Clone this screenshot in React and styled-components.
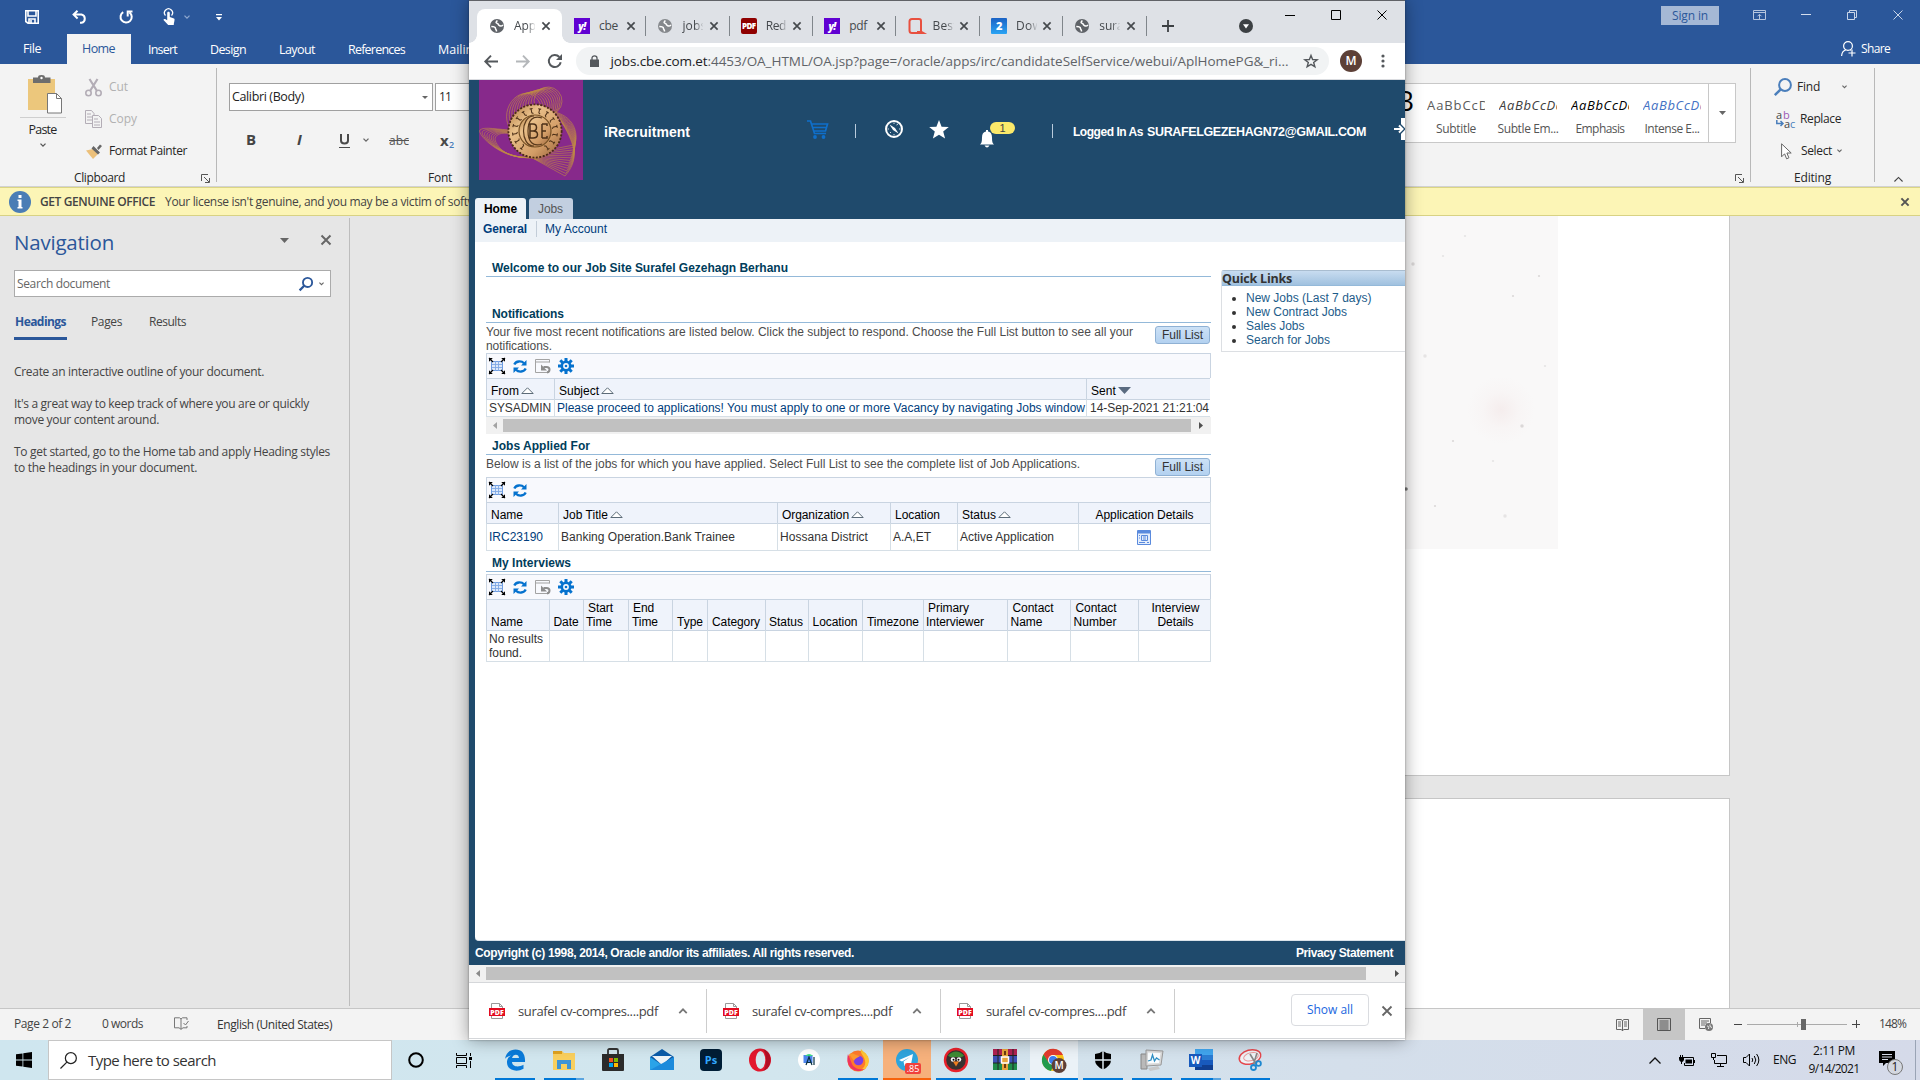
import React, { useLayoutEffect, useRef } from 'react';
import styled, { createGlobalStyle, css } from 'styled-components';

const UI = '"Open Sans", "Noto Sans", sans-serif';
const ARIAL = '"Liberation Sans", Arial, sans-serif';

const Global = createGlobalStyle`
  * { box-sizing: border-box; }
  body { margin: 0; overflow: hidden; font-family: ${UI}; font-size: 12px; }
  svg { display: block; flex: none; overflow: visible; }
`;

/* ---------- text that tracks itself to a given width ---------- */
const TextBox = styled.span`
  display: block;
  flex: none;
  width: ${p => p.$w}px;
  margin-left: ${p => p.$ml || 0}px;
  white-space: pre;
  font-family: ${p => (p.$arial ? ARIAL : UI)};
  font-size: ${p => p.$s || 12}px;
  font-weight: ${p => p.$b || 400};
  font-style: ${p => (p.$i ? 'italic' : 'normal')};
  color: ${p => p.$c || 'inherit'};
  line-height: ${p => p.$lh || 16}px;
  position: relative;
  top: ${p => p.$dy || 0}px;
`;
function Fit({ w, ml, s, b, i, c, lh, dy, arial, children }) {
  const ref = useRef(null);
  useLayoutEffect(() => {
    const el = ref.current;
    el.style.letterSpacing = '0px';
    const n = el.textContent.length;
    el.style.letterSpacing = `${(w - el.getBoundingClientRect().width) / n}px`;
  });
  return (
    <TextBox $w={w} $ml={ml} $s={s} $b={b} $i={i} $c={c} $lh={lh} $dy={dy} $arial={arial}>
      <span ref={ref}>{children}</span>
    </TextBox>
  );
}
const A = p => <Fit arial {...p} />;

const Slot = styled.span`
  display: flex; flex: none; align-items: center; justify-content: center;
  width: ${p => p.$w}px;
  height: ${p => (p.$h ? p.$h + 'px' : 'auto')};
  margin-left: ${p => p.$ml || 0}px;
  margin-top: ${p => p.$mt || 0}px;
`;
const Row = styled.div`
  display: flex; flex: none; align-items: ${p => p.$align || 'center'};
  height: ${p => p.$h}px;
  padding-left: ${p => p.$pl || 0}px;
  margin-top: ${p => p.$mt || 0}px;
`;
const Chev = ({ c = '#666', w = 6, up, sw = 1.3 }) => (
  <svg width={w} height={w / 2 + 1} viewBox="0 0 6 4" fill="none" stroke={c} strokeWidth={sw}>
    <path d={up ? 'M.5 3.4 3 .9l2.5 2.5' : 'M.5.6 3 3.1 5.5.6'} />
  </svg>
);
const Cross = ({ s = 10, c = '#333', w = 1 }) => (
  <svg width={s} height={s} viewBox="0 0 10 10" stroke={c} strokeWidth={w}><path d="M.5.5l9 9M9.5.5l-9 9" /></svg>
);

const Desktop = styled.div`
  position: relative; width: 1920px; height: 1080px; overflow: hidden;
  display: flex; flex-direction: column; background: #e6e6e6;
`;

/* ================= Word ================= */
const WordTitle = styled.div`
  display: flex; align-items: center; height: 34px; flex: none; background: #2b579a; color: #fff;
`;
const WordTabs = styled.div`
  display: flex; align-items: center; height: 30px; flex: none; background: #2b579a; color: #fff;
`;
const ActiveTab = styled.div`
  display: flex; align-items: center; height: 30px; width: 64px; margin-left: 26px; padding-left: 15px;
  background: #f3f3f3; color: #2b579a;
`;
const SignIn = styled.div`
  display: flex; align-items: center; width: 58px; height: 19px; margin: -3px 0 0 1439px; padding-left: 11px;
  background: #a5b8d5; color: #2b579a; flex: none;
`;
const Ribbon = styled.div`
  display: flex; height: 123px; flex: none; background: #f3f3f3; border-bottom: 1px solid #d2d2d2; color: #262626;
`;
const Group = styled.div`
  display: flex; flex-direction: column; width: ${p => p.$w}px; flex: none;
`;
const GroupLine = styled.div`
  width: 1px; height: 114px; margin-top: 4px; flex: none; background: #b8b8b8;
`;
const PasteCol = styled.div`
  display: flex; flex-direction: column; align-items: center; width: 85px; padding-top: 11px;
`;
const PasteArt = styled.div`padding-left: 5px;`;
const PasteRule = styled.div`width: 46px; height: 1px; background: #cfcfcf; margin: 3px 0 3px;`;
const Combo = styled.div`
  display: flex; align-items: center; width: ${p => p.$w}px; height: 28px; margin-left: ${p => p.$ml}px;
  border: 1px solid #a0a0a0; background: #fff; padding-left: 2px; flex: none;
`;
const Gallery = styled.div`
  display: flex; height: 60px; width: 453px; margin: 19px 0 0 0; border: 1px solid #c8c8c8; background: #fff;
  justify-content: flex-end; flex: none;
`;
const StyleCell = styled.div`
  width: 72px; height: 58px; padding: 13px 6px 0 7px; flex: none; color: #555;
`;
const Sample = styled.div`
  width: 58px; height: 22px; overflow: hidden; color: ${p => p.$c};
`;
const StyleName = styled.div`display: flex; justify-content: center; width: 58px; padding-top: 2px;`;
const TitleSample = styled.div`
  font: 400 27px/30px ${UI}; color: #000; padding: 2px 7px 0 0; letter-spacing: -1px;
`;
const GalleryMore = styled.div`
  width: 27px; border-left: 1px solid #c8c8c8; display: flex; align-items: center; justify-content: center; flex: none;
`;
const Notice = styled.div`
  display: flex; align-items: center; height: 29px; flex: none; background: #fcf5b6;
  border-top: 1px solid #dbd584; border-bottom: 1px solid #d8d284; color: #444;
`;
const WordBody = styled.div`display: flex; height: 792px; flex: none; background: #e6e6e6;`;
const NavPane = styled.div`
  width: 350px; border-right: 1px solid #bdbdbd; margin: 2px 0; color: #444; display: flex; flex-direction: column; flex: none;
`;
const NavSearch = styled.div`
  display: flex; align-items: center; width: 317px; height: 27px; margin: 10px 0 0 14px; border: 1px solid #ababab; background: #fff; flex: none;
`;
const NavTabs = styled.div`display: flex; height: 43px; margin-left: 14px; padding-top: 17px; flex: none;`;
const NavTab = styled.div`
  width: ${p => p.$w}px; height: 26px; margin-left: ${p => p.$ml || 0}px;
  ${p => p.$on && css`border-bottom: 3px solid #2b579a;`}
`;
const NavText = styled.div`padding: ${p => p.$pt}px 0 0 14px;`;
const Canvas = styled.div`display: flex; flex-direction: column; width: 1380px; padding-left: 140px; flex: none;`;
const Sheet = styled.div`
  height: ${p => p.$h}px; flex: none; background: #fff; border-right: 1px solid #c6c6c6;
  border-bottom: 1px solid #c6c6c6; margin-bottom: 22px;
  ${p => p.$top && css`border-top: 1px solid #c6c6c6; border-bottom: 0; margin-bottom: 0;`}
`;
const Photo = styled.div`
  width: 1068px; height: 333px; padding-left: 915px;
  background: radial-gradient(circle at 1011px 194px, #f5eded 0, #f8f5f5 18px, transparent 34px), #f9f8f8;
`;
const Status = styled.div`
  display: flex; align-items: center; height: 32px; flex: none; background: #f3f3f3; border-top: 1px solid #c6c6c6; color: #444;
`;
const ViewOn = styled.div`
  width: 42px; height: 31px; background: #c6c6c6; display: flex; align-items: center; justify-content: center; margin-left: 14px; flex: none;
`;
const Launcher = () => (
  <svg width="9" height="9" viewBox="0 0 9 9" fill="none" stroke="#555"><path d="M.5 7V.5H7M3 3l5 5M8.5 4v4.500H4" /></svg>
);
const Glass = ({ s = 18, c = '#4a7ebb', w = 2 }) => (
  <svg width={s} height={s} viewBox="0 0 18 18" fill="none" stroke={c} strokeWidth={w}><circle cx="11" cy="7" r="5.9" /><path d="M6.7 11.300.8 17.200" strokeWidth={w + .5} /></svg>
);

function WordTop() {
  return (
    <>
      <WordTitle>
        <Slot $w={14} $ml={25}><svg width="14" height="14" viewBox="0 0 14 14" fill="none" stroke="#fff" strokeWidth="1.6"><path d="M.8.8h12.400v12.400H3L.8 11.500zM3 1v5h8V1M4 13V9h6v4M6 10v3" /></svg></Slot>
        <Slot $w={15} $ml={33}><svg width="15" height="14" viewBox="0 0 15 14" fill="none" stroke="#fff" strokeWidth="2"><path d="M5.500.8 1.600 4.600l4 3.800M2 4.600h7.500a4.200 4.200 0 0 1 0 8.200H8" /></svg></Slot>
        <Slot $w={14} $ml={32}><svg width="14" height="14" viewBox="0 0 14 14" fill="none" stroke="#fff" strokeWidth="2"><path d="M4.200 2.200A5.600 5.600 0 1 0 10.500 2.500M13.500 1.500H8.700v5" /></svg></Slot>
        <Slot $w={12} $ml={30}><svg width="12" height="16" viewBox="0 0 12 16"><path d="M2.500 6.500a4 4 0 1 1 6 0" fill="none" stroke="#fff" strokeWidth="1.300" /><path d="M4.200 4c0-1.700 2.600-1.700 2.600 0v4l4.200 1.500c1 .4.500 2-.2 5.500V16H5.200L.5 11c0-1 1.200-1.500 3.700.3z" fill="#fff" /></svg></Slot>
        <Slot $w={6} $ml={9}><Chev c="#8fa8cf" /></Slot>
        <Slot $w={6} $ml={26}><svg width="6" height="7" viewBox="0 0 6 7" fill="#fff"><path d="M0 0h6v1.200H0zM0 3h6L3 6.500z" /></svg></Slot>
        <SignIn><Fit w={36}>Sign in</Fit></SignIn>
        <Slot $w={13} $ml={34} $mt={-4}><svg width="13" height="10" viewBox="0 0 13 10" fill="none" stroke="#b6c6df"><path d="M.5.5h12v9H.5zM.5 2.500h12M6.500 9V4.500M4.500 6.300l2-2 2 2" /></svg></Slot>
        <Slot $w={10} $ml={35} $mt={-5}><svg width="10" height="1"><path d="M0 .5h10" stroke="#d3dded" /></svg></Slot>
        <Slot $w={10} $ml={36} $mt={-4}><svg width="10" height="10" viewBox="0 0 10 10" fill="none" stroke="#c9d5e8"><path d="M.5 2.500h7v7h-7zM2.500 2.500v-2h7v7h-2" /></svg></Slot>
        <Slot $w={10} $ml={36} $mt={-4}><Cross c="#c9d5e8" /></Slot>
      </WordTitle>
      <WordTabs>
        <Fit w={18} ml={23} s={12.500} dy={0}>File</Fit>
        <ActiveTab><Fit w={33} s={12.500}>Home</Fit></ActiveTab>
        <Fit w={29} ml={17} s={12.500} dy={1}>Insert</Fit>
        <Fit w={36} ml={33} s={12.500} dy={1}>Design</Fit>
        <Fit w={36} ml={33} s={12.500} dy={1}>Layout</Fit>
        <Fit w={57} ml={33} s={12.500} dy={1}>References</Fit>
        <Fit w={48} ml={33} s={12.500} dy={1}>Mailings</Fit>
        <Slot $w={15} $ml={1355}><svg width="15" height="16" viewBox="0 0 15 16" fill="none" stroke="#fff" strokeWidth="1.200"><circle cx="7" cy="5" r="4.400" /><path d="M.6 15c.3-4 2-5.500 4.200-6M9 9.400l.6.200M11 8.500v7M7.500 12h7" /></svg></Slot>
        <Fit w={29} ml={5}>Share</Fit>
      </WordTabs>
      <Ribbon>
        <Group $w={216}>
          <Row $h={98} $align="flex-start">
            <PasteCol>
              <PasteArt><svg width="34" height="39" viewBox="0 0 34 39"><path d="M0 4h27v31H0z" fill="#ecc77c" /><path d="M5 2.500h5C10 .8 11 0 13.500 0S17 .8 17 2.500h5.500V8H5z" fill="#6d6d6d" /><circle cx="13.500" cy="3" r="1.200" fill="#fff" /><path d="M19.500 18.500h9l5 5v14.500h-14z" fill="#fff" stroke="#777" /><path d="M28.500 18.500v5h5" fill="none" stroke="#777" /></svg></PasteArt>
              <PasteRule />
              <Fit w={28} s={12.500} lh={18}>Paste</Fit>
              <Slot $w={8} $mt={4}><Chev c="#555" /></Slot>
            </PasteCol>
            <Group $w={130}>
              <Row $h={32} $mt={7}>
                <svg width="17" height="19" viewBox="0 0 17 19" fill="none" stroke="#b3adb6" strokeWidth="1.600"><path d="M4.500 1l7.500 12M12.500 1 5 13" strokeWidth="2.200" /><circle cx="3.500" cy="15" r="2.700" /><circle cx="13.500" cy="15" r="2.700" /></svg>
                <Fit w={19} ml={7} c="#b1b1b1">Cut</Fit>
              </Row>
              <Row $h={32}>
                <svg width="17" height="18" viewBox="0 0 17 18" fill="#f3f3f3" stroke="#b3adb6"><path d="M.5.5h6l2.500 3v10H.5z" /><path d="M2 4h4M2 7h5M2 10h5" /><path d="M7.500 5.500h6l3 3v9h-9zM9 9h4M9 12h6M9 15h6" /></svg>
                <Fit w={28} ml={7} c="#b1b1b1">Copy</Fit>
              </Row>
              <Row $h={32}>
                <svg width="17" height="15" viewBox="0 0 17 15"><path d="M1 6.500 8 5l5 5-5 5z" fill="#ecc07a" /><path d="M6.500 4.500 8.500 2l6.500 6.500-2 2zM12 4l3-3.500L17 2l-3.500 4z" fill="#666" /></svg>
                <Fit w={78} ml={7}>Format Painter</Fit>
              </Row>
            </Group>
          </Row>
          <Row $h={20} $mt={6} $pl={74}><Fit w={51}>Clipboard</Fit><Slot $w={9} $ml={76}><Launcher /></Slot></Row>
        </Group>
        <GroupLine />
        <Group $w={1066}>
          <Row $h={28} $mt={19}>
            <Combo $w={204} $ml={12}><Fit w={72} s={12.500} c="#222">Calibri (Body)</Fit><Slot $w={6} $ml={118}><svg width="6" height="3"><path d="M0 0h6L3 3z" fill="#666" /></svg></Slot></Combo>
            <Combo $w={60} $ml={2}><Fit w={12} ml={1}>11</Fit></Combo>
          </Row>
          <Row $h={30} $mt={14} $pl={29}>
            <Fit w={10} s={15} b={700} c="#444" dy={-1}>B</Fit>
            <Fit w={8} ml={41} s={15} b={700} i c="#444" dy={-1}>I</Fit>
            <Slot $w={11} $ml={34}><svg width="11" height="15" viewBox="0 0 11 15" fill="none" stroke="#4a4a4a"><path d="M2 1v6.500c0 4 7 4 7 0V1" strokeWidth="2" /><path d="M0 14.500h11" /></svg></Slot>
            <Slot $w={6} $ml={13}><Chev /></Slot>
            <Fit w={20} ml={20} s={12} c="#555" dy={1}><s>abc</s></Fit>
            <Fit w={9} ml={31} s={15} b={700} c="#4a4a4a">x</Fit><Fit w={5} s={9} b={600} c="#4a7ebb" dy={5}>2</Fit>
          </Row>
          <Row $h={20} $mt={13} $pl={211}><Fit w={24}>Font</Fit></Row>
        </Group>
        <Group $w={467}>
          <Row $h={84} $align="flex-start">
            <Gallery>
              <TitleSample>AaB</TitleSample>
              <StyleCell><Sample $c="#5a5a5a"><Fit w={71} s={13}>AaBbCcDd</Fit></Sample><StyleName><Fit w={40}>Subtitle</Fit></StyleName></StyleCell>
              <StyleCell><Sample $c="#404040"><Fit w={65} s={13} i>AaBbCcDd</Fit></Sample><StyleName><Fit w={61}>Subtle Em...</Fit></StyleName></StyleCell>
              <StyleCell><Sample $c="#000"><Fit w={65} s={13} i>AaBbCcDd</Fit></Sample><StyleName><Fit w={49}>Emphasis</Fit></StyleName></StyleCell>
              <StyleCell><Sample $c="#4472c4"><Fit w={65} s={13} i>AaBbCcDd</Fit></Sample><StyleName><Fit w={55}>Intense E...</Fit></StyleName></StyleCell>
              <GalleryMore><svg width="7" height="4"><path d="M0 0h7L3.500 4z" fill="#666" /></svg></GalleryMore>
            </Gallery>
          </Row>
          <Row $h={20} $mt={20} $pl={452}><Launcher /></Row>
        </Group>
        <GroupLine />
        <Group $w={123}>
          <Row $h={32} $mt={7} $pl={23}><Glass /><Fit w={23} ml={5}>Find</Fit><Slot $w={5} $ml={22}><Chev w={5} /></Slot></Row>
          <Row $h={32} $pl={25}>
            <Group $w={20}>
              <Row $h={9}><Fit w={7} s={11} lh={9} c="#444">a</Fit><Fit w={6} s={11} lh={9} c="#9b59b6">b</Fit></Row>
              <Row $h={9}><svg width="8" height="7" viewBox="0 0 8 7" fill="none" stroke="#4a7ebb" strokeWidth="1.500"><path d="M.8 0v3.500H7M4.500 1 7 3.500 4.500 6" /></svg><Fit w={6} s={11} lh={9} c="#444">a</Fit><Fit w={5} s={11} lh={9} c="#4a7ebb">c</Fit></Row>
            </Group>
            <Fit w={41} ml={4}>Replace</Fit>
          </Row>
          <Row $h={32} $pl={30}>
            <svg width="11" height="17" viewBox="0 0 11 17" fill="#fff" stroke="#666"><path d="M.6.8v13l3-3 2 5 2.300-1-2-4.800h4.300z" /></svg>
            <Fit w={31} ml={9}>Select</Fit><Slot $w={5} $ml={5}><Chev w={5} /></Slot>
          </Row>
          <Row $h={20} $mt={1} $pl={43}><Fit w={37}>Editing</Fit></Row>
        </Group>
        <GroupLine />
        <Slot $w={11} $ml={18} $h={20} $mt={105}><Chev up w={11} sw={.7} c="#444" /></Slot>
      </Ribbon>
      <Notice>
        <Slot $w={22} $ml={9}><svg width="22" height="22" viewBox="0 0 22 22"><circle cx="11" cy="11" r="11" fill="#4a7db5" /><path d="M9.500 4h3v3h-3zM8.500 8.500h4V16h1v1.500h-5V16h1v-6h-1z" fill="#fff" /></svg></Slot>
        <Fit w={115} ml={9} b={600}>GET GENUINE OFFICE</Fit>
        <Fit w={329} ml={10}>Your license isn't genuine, and you may be a victim of software</Fit>
        <Slot $w={8} $ml={1407}><Cross s={8} c="#555" w={2.500} /></Slot>
      </Notice>
    </>
  );
}

const specks = [[8, 48], [38, 40], [108, 80], [20, 140], [48, 225], [88, 245], [117, 210], [60, 20], [134, 60], [100, 300], [30, 290], [140, 150]];
function WordMain() {
  return (
    <>
      <WordBody>
        <NavPane>
          <Row $h={36} $mt={6} $pl={14}>
            <Fit w={100} s={20.500} c="#2b579a" lh={28}>Navigation</Fit>
            <Slot $w={9} $ml={166} $mt={-4}><svg width="9" height="5"><path d="M0 0h9L4.500 5z" fill="#666" /></svg></Slot>
            <Slot $w={10} $ml={32} $mt={-5}><Cross c="#666" w={2} /></Slot>
          </Row>
          <NavSearch>
            <Fit w={93} ml={2} c="#666">Search document</Fit>
            <Slot $w={14} $ml={189}><Glass s={14} c="#2b579a" w={2.400} /></Slot>
            <Slot $w={5} $ml={6}><Chev w={5} /></Slot>
          </NavSearch>
          <NavTabs>
            <NavTab $on $w={53}><Fit w={51} ml={1} b={700} c="#2b579a">Headings</Fit></NavTab>
            <NavTab $w={31} $ml={24}><Fit w={31}>Pages</Fit></NavTab>
            <NavTab $w={37} $ml={27}><Fit w={37}>Results</Fit></NavTab>
          </NavTabs>
          <NavText $pt={24}><Fit w={250}>Create an interactive outline of your document.</Fit></NavText>
          <NavText $pt={16}><Fit w={295}>It's a great way to keep track of where you are or quickly</Fit><Fit w={145}>move your content around.</Fit></NavText>
          <NavText $pt={16}><Fit w={316}>To get started, go to the Home tab and apply Heading styles</Fit><Fit w={183}>to the headings in your document.</Fit></NavText>
        </NavPane>
        <Canvas>
          <Sheet $h={560}>
            <Photo><svg width="153" height="333">{specks.map(([x, y], i) => <circle key={i} cx={x} cy={y} r={i % 3 === 0 ? 1.700 : 1.100} fill="#d3cfcf" opacity={i % 2 ? .5 : .8} />)}<circle cx="1" cy="273" r="1.800" fill="#777" /></svg></Photo>
          </Sheet>
          <Sheet $h={210} $top />
        </Canvas>
      </WordBody>
      <Status>
        <Fit w={57} ml={14} dy={-1}>Page 2 of 2</Fit>
        <Fit w={41} ml={31} dy={-1}>0 words</Fit>
        <Slot $w={15} $ml={31} $mt={-2}><svg width="15" height="13" viewBox="0 0 15 13" fill="none" stroke="#777"><path d="M7 2 5.500.8H.5v10H5l2 1.500zM7 2 8.500.8H13V3M7 12.300l2-1.500h4V9M9.500 6l2 2 3-4" /></svg></Slot>
        <Fit w={115} ml={28} c="#333" dy={0}>English (United States)</Fit>
        <Slot $w={13} $ml={1284}><svg width="13" height="12" viewBox="0 0 13 12" fill="none" stroke="#666"><path d="M6.500 12V1.500L5 .5H.5v10H5l1.500 1 1.500-1h4.500V.5H8l-1.500 1M2 3h3M2 5h3M2 7h3M8 3h3M8 5h3M8 7h3" /></svg></Slot>
        <ViewOn><svg width="14" height="13" viewBox="0 0 14 13" fill="none" stroke="#555"><path d="M.5.5h13v12H.5zM2.500 3h9M2.500 5h9M2.500 7h9M2.500 9h9M2.500 11h9" /></svg></ViewOn>
        <Slot $w={14} $ml={14}><svg width="14" height="13" viewBox="0 0 14 13" fill="none" stroke="#666"><path d="M6 10.500H.5V.5h11V5M2 3h8M2 5h6M2 7h4" /><circle cx="10" cy="9" r="4" fill="#777" stroke="none" /><path d="M8 8c2 0 2 1 1.500 3M11 6.500v2l2 1" stroke="#eee" /></svg></Slot>
        <Slot $w={8} $ml={21} $mt={-1}><svg width="8" height="1"><path d="M0 .5h8" stroke="#444" /></svg></Slot>
        <Slot $w={100} $ml={5}><svg width="100" height="11"><path d="M0 5.500h100M50.500 3v5" stroke="#aaa" /><path d="M54 0h5v11h-5z" fill="#666" /></svg></Slot>
        <Slot $w={8} $ml={5} $mt={-1}><svg width="8" height="8"><path d="M0 4.500h8M4.500 0v8" stroke="#444" /></svg></Slot>
        <Fit w={27} ml={19} dy={-1}>148%</Fit>
      </Status>
    </>
  );
}

/* ================= Browser window ================= */
const Window = styled.div`
  position: absolute; left: 469px; top: 0; width: 936px; height: 1040px; z-index: 2;
  display: flex; flex-direction: column; background: #fff; border-top: 1px solid #606267;
  box-shadow: 0 0 2px rgba(0,0,0,.35), 0 0 16px rgba(0,0,0,.38);
`;
const Strip = styled.div`display: flex; height: 42px; flex: none; background: #dee1e6; padding: 8px 0 0 8px; overflow: hidden;`;
const Tab = styled.div`
  display: flex; align-items: center; position: relative; width: 83.400px; height: 34px; flex: none; padding-left: 12px; color: #45494d;
  border-radius: 8px 8px 0 0;
  ${p => p.$on && css`
    width: 85px; background: #fff;
    &::before, &::after { content: ''; position: absolute; bottom: 0; width: 8px; height: 8px; }
    &::before { left: -8px; background: radial-gradient(circle at 0 0, transparent 7.500px, #fff 8px); }
    &::after { right: -8px; background: radial-gradient(circle at 100% 0, transparent 7.500px, #fff 8px); }`}
`;
const TabSep = styled.span`width: 1px; height: 20px; background: #80868b; margin-left: auto; margin-right: -.8px; visibility: ${p => (p.$off ? 'hidden' : 'visible')};`;
const TabTitle = styled.span`
  width: 21px; margin-left: 9px; overflow: hidden; flex: none;
  mask-image: ${p => (p.$fade ? 'linear-gradient(90deg, #000 60%, rgba(0,0,0,.1))' : 'none')};
`;
const ToolbarRow = styled.div`display: flex; align-items: center; height: 37px; flex: none; border-bottom: 1px solid #dadce0; background: #fff;`;
const Omni = styled.div`display: flex; align-items: center; width: 753px; height: 28px; margin-left: 14px; border-radius: 14px; background: #f1f3f4;`;
const Avatar = styled.div`
  display: flex; align-items: center; justify-content: center; width: 22px; height: 22px; margin-left: 11px; border-radius: 50%; background: #5d4037; color: #fff;
  font: 600 12px/22px ${UI};
`;
const Page = styled.div`display: flex; flex-direction: column; height: 885px; flex: none; background: #1f4a6c; overflow: hidden;`;
const PageHead = styled.div`display: flex; height: 118px; flex: none; padding-left: 10px; color: #fff;`;
const HeadItems = styled.div`display: flex; align-items: center; height: 54px; margin-top: 24px; overflow: visible;`;
const VLine = styled.span`width: 1px; height: ${p => p.$h || 14}px; margin-left: ${p => p.$ml}px; background: ${p => p.$c || '#b9cbdc'}; flex: none;`;
const BellBox = styled.span`position: relative; width: 14px; height: 18px; margin: 15px 0 0 31px; flex: none;`;
const Badge = styled.span`
  position: absolute; left: 10px; top: -8px; width: 25px; height: 12px; border-radius: 6px; background: #fbe96a; color: #444;
  font: 11px/13px ${ARIAL}; text-align: center;
`;
const PageTabs = styled.div`display: flex; height: 21px; padding-left: 6px; flex: none;`;
const PageTab = styled.div`
  width: ${p => p.$w}px; height: 21px; padding: 3px 0 0 9px; margin-right: 3px; border-radius: 3px 3px 0 0;
  background: ${p => (p.$on ? '#edf2f7' : '#c2cfe0')}; color: ${p => (p.$on ? '#000' : '#555')};
`;
const SubNav = styled.div`display: flex; align-items: center; height: 23px; margin-left: 6px; padding-left: 8px; background: #edf2f7; color: #003d7c; flex: none; padding-bottom: 3px;`;
const Sheet2 = styled.div`display: flex; height: 699px; margin-left: 6px; background: #fff; border-bottom: 1px solid #dbe3ea; border-radius: 0 0 0 4px; flex: none;`;
const Main = styled.div`display: flex; flex-direction: column; width: 725px; margin-left: 11px; flex: none; color: #4c4c4c;`;
const Heading = styled.div`
  height: 18px; margin-top: ${p => p.$mt}px; padding: 2px 0 0 6px; border-bottom: 1px solid #94b9d9; color: #003d5b; flex: none;
`;
const Intro = styled.div`display: flex; justify-content: space-between; height: ${p => p.$h}px; padding: 2px 1px 0 0; flex: none;`;
const ListButton = styled.button`
  width: 55px; height: 18px; margin-top: 1px; padding: 0 0 0 6px; border: 1px solid #8fb1d4; border-radius: 3px; background: linear-gradient(#cce1f6, #b3d1f0); color: #333; flex: none;
`;
const ToolStrip = styled.div`display: flex; align-items: center; height: 25px; padding-left: 2px; border: 1px solid #c9d4e1; border-bottom: 0; background: #f8f9fd; flex: none;`;
const Grid = styled.div`
  display: grid; grid-template-columns: ${p => p.$cols}; flex: none; border-right: 1px solid ${p => (p.$open ? 'transparent' : '#d6dfe6')};
`;
const Th = styled.div`
  display: flex; align-items: flex-end; height: ${p => p.$h || 21}px; padding: 0 0 ${p => p.$pb ?? 0}px ${p => p.$pl ?? 4}px; background: #eff3fb; color: #000;
  border: solid #c9d4e1; border-width: 1px 0 0 1px; flex-wrap: nowrap;
`;
const ThStack = styled.div`display: flex; flex-direction: column; align-items: ${p => (p.$center ? 'center' : 'flex-start')};`;
const Td = styled.div`
  display: ${p => (p.$block ? 'block' : 'flex')}; align-items: center; height: ${p => p.$h}px; padding-left: ${p => p.$pl ?? 2}px; padding-top: ${p => (p.$block ? 1 : 0)}px; color: ${p => p.$c || '#333'}; background: #fff;
  border: solid #d6dfe6; border-width: 1px 0 1px 1px; border-top-color: #c9d4e1;
`;
const HBar = styled.div`display: flex; align-items: center; height: ${p => p.$h}px; background: #f1f1f1; flex: none;`;
const Thumb = styled.div`height: 13px; width: ${p => p.$w}px; margin: 0 ${p => p.$mr}px 0 ${p => p.$ml}px; background: #c1c1c1;`;
const Quick = styled.div`width: 190px; height: 82px; margin: 28px 0 0 10px; border: 1px solid #dcdfe3; border-top: 1px solid #a9bdd0; border-radius: 3px 0 0 0; flex: none;`;
const QuickHead = styled.div`height: 15px; background: linear-gradient(#c8dcf0, #a0c1df); border-bottom: 1px solid #94b9d9; color: #333;`;
const QuickList = styled.ul`list-style: none; margin: 5px 0 0; padding: 0; color: #1d5c8a;`;
const QuickItem = styled.li`
  display: flex; align-items: center; height: 14px;
  &::before { content: ''; width: 4px; height: 4px; margin: 2px 10px 0 10px; border-radius: 50%; background: #333; }
`;
const PageFoot = styled.div`display: flex; align-items: center; height: 24px; padding-left: 6px; color: #fff; flex: none;`;
const Shelf = styled.div`display: flex; align-items: center; height: 57px; border-top: 1px solid #d5d7da; border-bottom: 1px solid #d5d7da; background: #fff; color: #444; flex: none;`;
const Download = styled.div`display: flex; align-items: center; width: 234px; height: 44px; padding-left: 20px; flex: none;`;
const ShowAll = styled.div`display: flex; align-items: center; width: 78px; height: 32px; margin-left: 120px; padding-left: 15px; margin-top: -1px; border: 1px solid #dadce0; border-radius: 4px; color: #1a66e0; flex: none;`;

const Globe = ({ c = '#5f6368' }) => (
  <svg width="16" height="16" viewBox="0 0 16 16"><circle cx="8" cy="8" r="7" fill={c} /><path d="M2.300 8.500c2 0 4.200.4 4.200 2 0 1.200 1.200 1 1 3M14 7c-1.500 1.600-3.200 1.300-4.300 0-1-1.200-.2-1.600-1.700-1.800-1.800-.3-.4-2.200.5-2.500" fill="none" stroke="#fff" strokeWidth="1.500" /></svg>
);
const IconText = styled.span`
  display: flex; align-items: center; justify-content: center; width: 16px; height: 16px; background: ${p => p.$bg}; border-radius: ${p => p.$r || 0}px;
  color: #fff; font: ${p => p.$i ? 'italic ' : ''}800 ${p => p.$s}px/16px ${UI}; letter-spacing: -.5px; overflow: hidden; flex: none;
`;
const Quora = () => <svg width="16" height="16" viewBox="0 0 16 16" fill="none" stroke="#e8503f" strokeWidth="2"><path d="M4 1h7q2 0 2 2v10.500l2.500 1.500H4q-2.500 0-2.500-2.500V3.500Q1.500 1 4 1zM9 14h5" /></svg>;
const tabs = [
  ['App', <Globe key="g" />, 22], ['cbe', <IconText key="y" $bg="#6001d2" $s={10} $i>y!</IconText>, 19], ['jobs', <Globe key="g" c="#85888c" />, 24],
  ['Red', <IconText key="p" $bg="#8f0000" $s={8} $r={2}>PDF</IconText>, 20], ['pdf', <IconText key="y" $bg="#6001d2" $s={10} $i>y!</IconText>, 18], ['Best', <Quora key="q" />, 25],
  ['Dow', <IconText key="d" $bg="linear-gradient(#1b62c4, #2aa4f4)" $s={11} $r={1}>2</IconText>, 26], ['sura', <Globe key="g" />, 24],
];

function CbeLogo() {
  const top = Array.from({ length: 11 }, (_, i) => <ellipse key={i} cx={45 + i * 2.400} cy={34 - i * 1.300} rx={17 - i * .3} ry={21 - i * .7} transform={`rotate(${18 + i * 3} ${45 + i * 2.400} ${34 - i * 1.300})`} />);
  const left = Array.from({ length: 8 }, (_, i) => <path key={i} d={`M${34 + i} ${50 + i}C${20 + i} 50 ${5 + i} ${46 + i} ${1 + i * 2.300} ${50 + i * 1.800}S${26 + i} ${84 - i * .6} ${56 + i} ${76 + i * .2}`} />);
  const right = Array.from({ length: 13 }, (_, i) => <path key={i} d={`M${76 + i * .6} ${32 + i * .9}C${98} ${38 + i * 2.500} ${99} ${57 + i * 2} ${86 + (12 - i) * .8} ${96 - (12 - i) * 2.600}L${44 + i * .7} ${75 + i * .2}`} />);
  const ticks = Array.from({ length: 14 }, (_, i) => <path key={i} d="M-1.500 -22.500h3M0 -22.500v4l1.500 1" transform={`translate(56 51) rotate(${i * 22 - 142})`} />);
  return (
    <svg width="104" height="100" viewBox="0 0 104 100">
      <defs><linearGradient id="coin" x2="1" y2="1"><stop stopColor="#b07a40" /><stop offset=".3" stopColor="#e9c08a" /><stop offset=".7" stopColor="#d29c66" /><stop offset="1" stopColor="#96613a" /></linearGradient></defs>
      <path d="M0 0h104v100H0z" fill="#87298b" />
      <g fill="none" stroke="#c08a45" strokeWidth=".6">{top}{left}{right}</g>
      <circle cx="56" cy="51" r="26.500" fill="url(#coin)" stroke="#4c2b18" strokeWidth="2" strokeDasharray="2 1.500" />
      <circle cx="56" cy="51" r="25.500" fill="url(#coin)" />
      <g fill="none" stroke="#4c3018" strokeWidth="1">{ticks}</g>
      <circle cx="56" cy="51" r="16" fill="url(#coin)" stroke="#755024" strokeWidth="1.200" />
      <path d="M55 36c-14 0-14 30 0 30M63 38c-9-3-14 2-14 13s5 16 14 13" fill="none" stroke="#5a3a1c" strokeWidth="1.200" />
      <g fill="none" stroke="#4c3018" strokeWidth="1.500"><path d="M51 44v14M50 44h4q3.500 0 3.500 3.500T54 51h-3M54 51q4.500 0 4.500 3.500T54 58h-4M63 44v14M63 44h5v2M63 51h4M63 58h5v-2" /></g>
    </svg>
  );
}

const Expand = () => (
  <svg width="16" height="16" viewBox="0 0 16 16" fill="none"><path d="M2.500 3.500h11v9h-11z" fill="#dce8fa" stroke="#6d9be0" /><path d="M3 6.500h10M3 9.500h10M6.500 3v10M9.500 3v10" stroke="#7fa8e4" strokeWidth=".9" /><path d="M0 0l4 4M16 0l-4 4M0 16l4-4M16 16l-4-4" stroke="#000" strokeWidth="1.100" /><path d="M0 0h3.800L0 3.800zM16 0v3.800L12.200 0zM0 16v-3.800L3.800 16zM16 16h-3.800l3.800-3.800z" fill="#000" /></svg>
);
const Refresh = () => (
  <svg width="14" height="13" viewBox="0 0 14 13"><path d="M1.300 4.500C3 .8 8.500.6 11 3.300M12.700 8.500C11 12.200 5.500 12.400 3 9.700" fill="none" stroke="#0572ce" strokeWidth="2.300" /><path d="M13.500 0v5.500H8zM.5 13V7.500H6z" fill="#0572ce" /></svg>
);
const Revert = () => (
  <svg width="16" height="15" viewBox="0 0 16 15" fill="none"><path d="M.5.500h14v3M.5.500v13H14M.5 3h14" stroke="#a3a3a3" /><path d="M8.500 8h3q3 0 3 2.500T12 13.500" stroke="#8d8d8d" strokeWidth="2" /><path d="M6 5.500v6h6z" fill="#8d8d8d" /></svg>
);
const Gear = () => (
  <svg width="16" height="16" viewBox="0 0 16 16"><g stroke="#0572ce" fill="none"><circle cx="8" cy="8" r="4.200" strokeWidth="2.600" /><path d="M8 0v3M8 13v3M0 8h3M13 8h3M2.300 2.300l2.200 2.200M11.500 11.500l2.200 2.200M13.700 2.300l-2.200 2.200M2.300 13.700l2.200-2.200" strokeWidth="3" /></g><circle cx="8" cy="8" r="1.300" fill="#0572ce" /></svg>
);
const Tools = ({ all }) => (
  <ToolStrip><Expand /><Slot $w={14} $ml={7.500}><Refresh /></Slot>{all && <><Slot $w={16} $ml={8.500}><Revert /></Slot><Slot $w={16} $ml={7}><Gear /></Slot></>}</ToolStrip>
);
const Sort = ({ down }) => (
  <Slot $w={13} $ml={2} $h={18}><svg width="13" height="7" viewBox="0 0 13 7">{down ? <path d="M0 0h13L6.500 7z" fill="#5a6b80" /> : <path d="M.8 6.500h11.400L6.500.8z" fill="#fff" stroke="#5c6b78" />}</svg></Slot>
);
const Arrow = ({ left, c = '#505050' }) => <svg width="4" height="7"><path d={left ? 'M4 0v7L0 3.500z' : 'M0 0v7l4-3.500z'} fill={c} /></svg>;

const interviews = [
  ['', 0, 'Name', 32, 4], ['', 0, 'Date', 25, 3.5], ['Start', 25, 'Time', 26, 2, 2], ['End', 21, 'Time', 26, 3, 1], ['', 0, 'Type', 26, 4], ['', 0, 'Category', 48, 4],
  ['', 0, 'Status', 34, 3], ['', 0, 'Location', 45, 3.5], ['', 0, 'Timezone', 52, 4], ['Primary', 41, 'Interviewer', 58, 2, 2], ['Contact', 41, 'Name', 32, 2.5, 2], ['Contact', 41, 'Number', 43, 2.5, 2], ['Interview', 48, 'Details', 36, 12.5, 0, 1],
];

function Portal() {
  return (
    <Page>
      <PageHead>
        <CbeLogo />
        <HeadItems>
          <A w={86} ml={21} s={14} b={700} dy={1}>iRecruitment</A>
          <Slot $w={21} $ml={117} $mt={-3}><svg width="21" height="19" viewBox="0 0 21 19" fill="none" stroke="#0f6fca"><path d="M0 1h3.500l4 12.500H19M4.500 4h16l-2 7H7M6 7.500h13" strokeWidth="1.700" /><circle cx="8" cy="17" r="1.900" fill="#0f6fca" stroke="none" /><circle cx="16.500" cy="17" r="1.900" fill="#0f6fca" stroke="none" /></svg></Slot>
          <VLine $ml={27} />
          <Slot $w={18} $ml={29} $mt={-4}><svg width="18" height="18" viewBox="0 0 18 18" fill="none" stroke="#fff"><circle cx="9" cy="9" r="8" strokeWidth="2" /><path d="M9 2.500v1.500M9 14v1.500M2.500 9H4M14 9h1.500M11.500 5 13 4M5 13l1-1" strokeWidth=".8" /><path d="M4.500 4.500 10 8l3.500 5.500L8 10z" fill="#fff" stroke="none" /></svg></Slot>
          <Slot $w={20} $ml={26} $mt={-4}><svg width="20" height="19" viewBox="0 0 20 19" fill="#fff"><path d="M10 0l2.600 6.700 7.200.4-5.600 4.500 1.900 7L10 14.700l-6.100 3.900 1.900-7L.2 7.100l7.200-.4z" /></svg></Slot>
          <BellBox>
            <svg width="14" height="18" viewBox="0 0 14 18" fill="#fff"><path d="M6 0h2v1.500c3 .5 4 3 4 6 0 4 .5 6 2 7H0c1.500-1 2-3 2-7 0-3 1-5.500 4-6zM4.500 15.500h5q-2.500 4-5 0z" /></svg>
            <Badge>1</Badge>
          </BellBox>
          <VLine $ml={58} />
          <A w={70} ml={20} s={12} b={700} dy={1}>Logged In As</A>
          <A w={219} ml={4} s={12.500} b={700} dy={1}>SURAFELGEZEHAGN72@GMAIL.COM</A>
          <Slot $w={22} $ml={28} $mt={-4}><svg width="22" height="22" viewBox="0 0 22 22"><path d="M7 0h15v22H7z" fill="#fff" /><path d="M0 11h8M5 7l4 4-4 4" fill="none" stroke="#1f4a6c" strokeWidth="4" /><path d="M0 11h8M5 7.500 8.500 11 5 14.500" fill="none" stroke="#fff" strokeWidth="2" /></svg></Slot>
        </HeadItems>
      </PageHead>
      <PageTabs>
        <PageTab $on $w={51}><A w={33} b={700}>Home</A></PageTab>
        <PageTab $w={44}><A w={25}>Jobs</A></PageTab>
      </PageTabs>
      <SubNav><A w={44} b={700}>General</A><VLine $ml={9} $c="#c3cdd8" $h={16} /><A w={62} ml={8}>My Account</A></SubNav>
      <Sheet2>
        <Main>
          <Heading $mt={17}><A w={296} b={700} lh={14}>Welcome to our Job Site Surafel Gezehagn Berhanu</A></Heading>
          <Heading $mt={28}><A w={72} b={700} lh={14}>Notifications</A></Heading>
          <Intro $h={30}>
            <div><A w={647} lh={14}>Your five most recent notifications are listed below. Click the subject to respond. Choose the Full List button to see all your</A><A w={66} lh={14}>notifications.</A></div>
            <ListButton><A w={41}>Full List</A></ListButton>
          </Intro>
          <Tools all />
          <Grid $open $cols="68px 532px 1fr">
            <Th><A w={28}>From</A><Sort /></Th><Th><A w={40}>Subject</A><Sort /></Th><Th><A w={25}>Sent</A><Sort down /></Th>
            <Td $h={18}><A w={62}>SYSADMIN</A></Td><Td $h={18} $c="#003d7c"><A w={528}>Please proceed to applications! You must apply to one or more Vacancy by navigating Jobs window</A></Td><Td $h={18} $pl={3}><A w={119}>14-Sep-2021 21:21:04</A></Td>
          </Grid>
          <HBar $h={17}><Slot $w={17}><Arrow left c="#a3a3a3" /></Slot><Thumb $w={690} $ml={0} $mr={0} /><Slot $w={20}><Arrow /></Slot></HBar>
          <Heading $mt={3}><A w={98} b={700} lh={14}>Jobs Applied For</A></Heading>
          <Intro $h={22}>
            <A w={594} lh={14}>Below is a list of the jobs for which you have applied. Select Full List to see the complete list of Job Applications.</A>
            <ListButton><A w={41}>Full List</A></ListButton>
          </Intro>
          <Tools />
          <Grid $cols="72px 219px 113px 67px 121px 1fr">
            <Th><A w={32}>Name</A></Th><Th><A w={45}>Job Title</A><Sort /></Th><Th><A w={67}>Organization</A><Sort /></Th><Th><A w={45}>Location</A></Th><Th><A w={34}>Status</A><Sort /></Th><Th $pl={16.500}><A w={98}>Application Details</A></Th>
            <Td $h={28} $c="#003d7c"><A w={54}>IRC23190</A></Td><Td $h={28}><A w={174}>Banking Operation.Bank Trainee</A></Td><Td $h={28}><A w={88}>Hossana District</A></Td><Td $h={28}><A w={38}>A.A,ET</A></Td><Td $h={28}><A w={94}>Active Application</A></Td>
            <Td $h={28} $pl={58}><svg width="14" height="15" viewBox="0 0 14 15" fill="none" stroke="#5a8add"><path d="M.5.500h13v14H.5z" fill="#e4edfb" /><path d="M1 2h12" strokeWidth="3" /><path d="M4.500 5.500h6v5h-6zM6 7h3M6 9h3M2 5.500h1M2 8h1M2 12.500h6M10 12.500h2" /></svg></Td>
          </Grid>
          <Heading $mt={3}><A w={79} b={700} lh={14}>My Interviews</A></Heading>
          <Slot $w={1} $h={2} />
          <Tools all />
          <Grid $cols="63px 34px 45px 44px 35px 58px 43px 54px 61px 84px 63px 68px 1fr">
            {interviews.map(([a, aw, b, bw, pl, al, center], i) => (
              <Th key={i} $h={31} $pl={pl} $pb={1}><ThStack $center={center}>{a && <A w={aw} ml={al} lh={14}>{a}</A>}<A w={bw} lh={14}>{b}</A></ThStack></Th>
            ))}
            {interviews.map((_, i) => (
              <Td key={i} $h={32} $block>{i === 0 && <><A w={54} lh={14}>No results</A><A w={33} lh={14}>found.</A></>}</Td>
            ))}
          </Grid>
        </Main>
        <Quick>
          <QuickHead><Fit w={70} s={12.500} b={700} lh={14} dy={1}>Quick Links</Fit></QuickHead>
          <QuickList>
            <QuickItem><A w={125.500} lh={14}>New Jobs (Last 7 days)</A></QuickItem>
            <QuickItem><A w={101} lh={14}>New Contract Jobs</A></QuickItem>
            <QuickItem><A w={58.500} lh={14}>Sales Jobs</A></QuickItem>
            <QuickItem><A w={84} lh={14}>Search for Jobs</A></QuickItem>
          </QuickList>
        </Quick>
      </Sheet2>
      <PageFoot><A w={379} b={700}>Copyright (c) 1998, 2014, Oracle and/or its affiliates. All rights reserved.</A><A w={97} ml={442} b={700}>Privacy Statement</A></PageFoot>
    </Page>
  );
}

const PdfIcon = () => (
  <svg width="16" height="16" viewBox="0 0 16 16"><path d="M2.500 5V.5h8l3 3V5M2.500 12v3.500h11V12M10.500.5v3h3" fill="#fff" stroke="#999" /><path d="M0 5h16v8H0z" fill="#e30b20" /><text x="8" y="11.600" fontFamily="Open Sans" fontSize="7" fontWeight="800" fill="#fff" textAnchor="middle">PDF</text></svg>
);

function Browser() {
  return (
    <Window>
      <Strip>
        {tabs.map(([name, icon, w], i) => (
          <Tab key={i} $on={i === 0}>
            {icon}<TabTitle $fade={!['cbe', 'pdf'].includes(name)}><Fit w={w}>{name}</Fit></TabTitle>
            <Slot $w={9} $ml={6}><Cross s={8} c="#45494d" w={2.100} /></Slot><TabSep $off={i === 0} />
          </Tab>
        ))}
        <Row $h={34} $pl={16.200}><svg width="12" height="12"><path d="M0 6h12M6 0v12" stroke="#3c4043" strokeWidth="1.800" /></svg>
          <Slot $w={14} $ml={65}><svg width="14" height="14"><circle cx="7" cy="7" r="7" fill="#3c4043" /><path d="M4 5.200h6L7 9.500z" fill="#fff" /></svg></Slot>
          <Slot $w={10} $ml={32} $mt={-22}><svg width="10" height="1"><path d="M0 .5h10" stroke="#000" /></svg></Slot>
          <Slot $w={10} $ml={36} $mt={-22}><svg width="10" height="10"><path d="M.5.5h9v9h-9z" fill="none" stroke="#000" /></svg></Slot>
          <Slot $w={10} $ml={36} $mt={-22}><Cross c="#000" /></Slot>
        </Row>
      </Strip>
      <ToolbarRow>
        <Slot $w={14} $ml={15}><svg width="14" height="13" viewBox="0 0 14 13" fill="none" stroke="#54585c" strokeWidth="1.900"><path d="M14 6.500H1.500M7 .7 1.300 6.500 7 12.300" /></svg></Slot>
        <Slot $w={14} $ml={18}><svg width="14" height="13" viewBox="0 0 14 13" fill="none" stroke="#b4b7ba" strokeWidth="1.900"><path d="M0 6.500h12.500M7 .7l5.700 5.800L7 12.300" /></svg></Slot>
        <Slot $w={14} $ml={18}><svg width="14" height="14" viewBox="0 0 14 14" fill="none" stroke="#54585c" strokeWidth="2"><path d="M12.700 8.200A6 6 0 1 1 11.300 3" /><path d="M14 0v6H8z" fill="#54585c" stroke="none" /></svg></Slot>
        <Omni>
          <Slot $w={8} $ml={14}><svg width="9" height="12" viewBox="0 0 9 12"><path d="M0 4.500h9V12H0z" fill="#54585c" /><path d="M2 5V3a2.500 2.200 0 0 1 5 0v2" fill="none" stroke="#54585c" strokeWidth="1.300" /></svg></Slot>
          <Fit w={97} ml={12.500} s={13.500} c="#202124" lh={20}>jobs.cbe.com.et</Fit>
          <Fit w={581} s={13.500} c="#5f6368" lh={20}>:4453/OA_HTML/OA.jsp?page=/oracle/apps/irc/candidateSelfService/webui/AplHomePG&_ri...</Fit>
          <Slot $w={14} $ml={15.500}><svg width="14" height="14" viewBox="0 0 20 19" fill="none" stroke="#54585c" strokeWidth="2"><path d="M10 1.500l2.300 5.800 6.500.4-5 4 1.700 6L10 14.200l-5.500 3.500 1.700-6-5-4 6.500-.4z" /></svg></Slot>
        </Omni>
        <Avatar>M</Avatar>
        <Slot $w={4} $ml={19}><svg width="4" height="14" fill="#54585c"><circle cx="2" cy="2" r="1.600" /><circle cx="2" cy="7" r="1.600" /><circle cx="2" cy="12" r="1.600" /></svg></Slot>
      </ToolbarRow>
      <Portal />
      <HBar $h={17}><Slot $w={17}><Arrow left c="#8a8a8a" /></Slot><Thumb $w={880} $ml={0} $mr={29} /><Arrow /></HBar>
      <Shelf>
        {[0, 1, 2].map(i => (
          <Download key={i}>
            <PdfIcon /><Fit w={140} ml={13} s={13} lh={20}>surafel cv-compres....pdf</Fit><Slot $w={10} $ml={20}><Chev up w={10} c="#777" sw={1.200} /></Slot><VLine $ml={18} $h={44} $c="#cdcdcd" />
          </Download>
        ))}
        <ShowAll><Fit w={46}>Show all</Fit></ShowAll>
        <Slot $w={10} $ml={13}><Cross c="#666" w={1.800} /></Slot>
      </Shelf>
    </Window>
  );
}

/* ================= Taskbar ================= */
const Bar = styled.div`
  display: flex; height: 40px; flex: none; background: linear-gradient(90deg, #cfe6ef 0, #d2e6ee 40%, #d4dfeb 70%, #d5dae9 100%); color: #111;
`;
const Start = styled.div`width: 48px; display: flex; align-items: center; justify-content: center;`;
const Search = styled.div`display: flex; align-items: center; width: 344px; height: 40px; border: 1px solid #c6c6c6; background: #fff; color: #333;`;
const Apps = styled.div`display: flex; gap: 1px; margin-left: 3px;`;
const App1 = styled.div`
  position: relative; width: 48px; height: 40px; display: flex; align-items: center; justify-content: center;
  background: ${p => p.$bg || 'transparent'};
  &::after { content: ''; position: absolute; bottom: 0; left: ${p => (p.$bg ? 0 : 4)}px; right: ${p => (p.$bg ? 0 : 4)}px; height: 2px; background: ${p => p.$line || 'transparent'}; }
`;
const Bubble = styled.span`
  position: absolute; left: 22px; top: 23px; width: 16px; height: 11px; border-radius: 2px; background: #f0413c; color: #fff; font: 9px/11px ${UI}; text-align: center;
`;
const Clock = styled.div`display: flex; flex-direction: column; align-items: center; width: 54px; margin-left: 11px; padding-top: 2px;`;
const Count = styled.span`
  position: absolute; left: 8px; top: 8px; width: 16px; height: 16px; border: 1px solid #777; border-radius: 50%; background: #d4d8e0; color: #222; font: 12px/14px ${UI}; text-align: center;
`;
const NoteBox = styled.span`position: relative; width: 16px; height: 16px; margin: 11px 0 0 18px;`;
const IcoSvg = ({ children }) => <svg width="24" height="24" viewBox="0 0 24 24">{children}</svg>;
const Blue = '#0078d7';
const Two = 'linear-gradient(90deg, #0078d7 80%, #5ba5e0 80%)';
const PsBox = styled.span`
  width: 22px; height: 22px; border-radius: 4px; background: #001e36; color: #31a8ff; font: 700 11px/21px ${UI}; text-align: center;
`;

const apps = [
  [<IcoSvg key="e"><path d="M2 11C3 4 8 1.500 12.500 1.500 19 1.500 22.500 6 22 14H9c.3 5 6.500 5.500 11.500 2.800v4C13 25 3.500 22 4 13.500c.3-3 2-5 4-6C4.500 8.300 3 9.500 2 11zm7-1h7c0-4.500-6-4.500-7 0z" fill="#0a7ad9" /></IcoSvg>, Blue],
  [<IcoSvg key="x"><path d="M1 3h9l2 2h11v17H1z" fill="#f9cf5e" /><path d="M1 3h9v3H1z" fill="#e0a21e" /><path d="M5 12h14v9h-4v-5H9v5H5z" fill="#3f94d6" /></IcoSvg>, Two],
  [<IcoSvg key="s"><path d="M7 7V2.500Q7 1 8.500 1h7Q17 1 17 2.500V7" fill="none" stroke="#333" strokeWidth="1.800" /><path d="M1 6h22v16q0 1-1 1H2q-1 0-1-1z" fill="#2b2b2b" /><path d="M8 10h4v4H8z" fill="#f25022" /><path d="M13 10h4v4h-4z" fill="#7fba00" /><path d="M8 15h4v4H8z" fill="#00a4ef" /><path d="M13 15h4v4h-4z" fill="#ffb900" /></IcoSvg>],
  [<IcoSvg key="m"><path d="M0 9 12 1l12 8v13H0z" fill="#0b5ba8" /><path d="M2 8h20l-10 9z" fill="#eef3f7" /><path d="M0 9l12 8 12-8v13H0z" fill="#2aa3e8" /><path d="M0 22 24 9v13z" fill="#1c8adb" /></IcoSvg>],
  [<PsBox key="p">Ps</PsBox>],
  [<IcoSvg key="o"><ellipse cx="12" cy="12" rx="11" ry="11.500" fill="#e3172d" /><ellipse cx="12.500" cy="12" rx="4.800" ry="9" fill="#d3e7ee" /><path d="M15 1c10 3 10 19 0 22 4-4 4-18 0-22z" fill="#b10f25" /></IcoSvg>],
  [<IcoSvg key="a"><circle cx="12" cy="12" r="11" fill="#fff" /><path d="M6.500 7h9v8h-9z" fill="#4f86ee" /><path d="M8 8q4-4 8 0z" fill="#3ddc84" /><path d="m9 17 3-8 3 8M10 14.500h4M17 9v8" stroke="#073042" strokeWidth="1.200" fill="none" /></IcoSvg>],
  [<IcoSvg key="f"><circle cx="12" cy="13" r="10.500" fill="#ff7a2a" /><path d="M15 1c2 3 8 5 8 12a11 11 0 0 1-11 10.500C20 20 21 14 17 8c-1-2-3-4-2-7z" fill="#ffc531" /><path d="M2 6c-1 4-1 9 2 13 4 5 11 5 15 2-7 1-11-1-13-5z" fill="#f0345f" /><circle cx="12.500" cy="12.500" r="4.800" fill="#7b3fe4" /><path d="M3 6c3-1 5-.5 7 1l4 1c-3 2-5 2-6 5z" fill="#ff9a2e" /></IcoSvg>, Blue],
  [<React.Fragment key="t"><IcoSvg><circle cx="12" cy="12" r="11" fill="#2fa4dc" /><path d="m4 12 14-6-2.500 13-4-3-2 2-1-4.500L15 9l-8 4.500z" fill="#fff" /></IcoSvg><Bubble>.85</Bubble></React.Fragment>, '#f7630c', '#f6b17c'],
  [<IcoSvg key="b"><circle cx="12" cy="12" r="11" fill="#3a3230" stroke="#e8212b" strokeWidth="2.400" /><path d="M4 7.500q8-8 16 0l-2 1.500H6z" fill="#3e8a34" /><circle cx="9" cy="11.500" r="2.200" fill="#fff" /><circle cx="15" cy="11.500" r="2.200" fill="#fff" /><circle cx="9.500" cy="11.800" r="1" /><circle cx="14.500" cy="11.800" r="1" /><path d="M9 13.500h6l-3 5z" fill="#f07f1f" /></IcoSvg>, Blue],
  [<IcoSvg key="r"><path d="M0 1h24v7H0z" fill="#b02050" /><path d="M0 8h24v7H0z" fill="#3d50b5" /><path d="M0 15h24v7H0z" fill="#1f8b4a" /><path d="M0 7.500h24M0 15h24M5 1v21M20 1v21" stroke="#222" /><path d="M9 1h6v21H9z" fill="#e8a43a" /><path d="M8.500 9h7v6h-7z" fill="none" stroke="#fff" strokeWidth="1.500" /><path d="M11 3h2v4h-2zM11 16h2v4h-2z" fill="#6b3a10" /></IcoSvg>, Blue],
  [<IcoSvg key="c"><circle cx="11" cy="12" r="11" fill="#fbc116" /><path d="M1.500 6.500A11 11 0 0 1 21 7H11l-4.500 8z" fill="#e33b2e" /><path d="M1.500 6.500 7 15l5 1-3 7C0 21-2 12 1.500 6.500z" fill="#229a4c" /><circle cx="11" cy="12" r="5" fill="#fff" /><circle cx="11" cy="12" r="4" fill="#3c7ded" /><circle cx="17" cy="17.500" r="7.500" fill="#5d4037" /><text x="17" y="21.200" fontFamily="Open Sans" fontWeight="600" fontSize="10" fill="#fff" textAnchor="middle">M</text></IcoSvg>, Blue, '#ebf2f7'],
  [<IcoSvg key="d"><path d="M12 3q3 2.500 8 3v6q0 6-8 9.500Q4 18 4 12V6q5-.5 8-3z" fill="#000" /><path d="M12 3v19M4 12h16" stroke="#dbe8ef" strokeWidth="1.500" /></IcoSvg>, Blue],
  [<IcoSvg key="n"><path d="M1 6h6v15H1z" fill="#b9b9b9" stroke="#888" /><path d="M6 2l17 1-2 14-15 1z" fill="#d9d9d9" stroke="#999" /><path d="M8 4.500l12.500.5-1.500 10-11 .5z" fill="#fafdff" /><path d="m8 13 3-1 1.500-5 2 6 2-3 3 2" fill="none" stroke="#2e8fc4" strokeWidth="1.300" /><path d="M8 20l10-2 2 3-10 2z" fill="#c8c8c8" /></IcoSvg>, Blue],
  [<IcoSvg key="w"><path d="M6 1h18v6H6z" fill="#41a5ee" /><path d="M6 7h18v5H6z" fill="#2b7cd3" /><path d="M6 12h18v5H6z" fill="#185abd" /><path d="M6 17h18v5H6z" fill="#103f91" /><path d="M0 6h13v13H0z" fill="#185abd" /><text x="6.500" y="16.300" fontFamily="Open Sans" fontWeight="700" fontSize="10" fill="#fff" textAnchor="middle">W</text></IcoSvg>, Two],
  [<IcoSvg key="z"><ellipse cx="12" cy="9" rx="11" ry="7" transform="rotate(-15 12 9)" fill="#eef3f6" stroke="#e5474c" strokeWidth="1.500" /><ellipse cx="13" cy="9" rx="7.500" ry="4" transform="rotate(-15 12 9)" fill="none" stroke="#e9999b" /><path d="m12 6 6 10M19 5l-4 13" stroke="#888" strokeWidth="1.600" /><circle cx="15.500" cy="19.500" r="2.500" fill="none" stroke="#1e88d0" strokeWidth="1.800" /><circle cx="20.500" cy="15.500" r="2.400" fill="none" stroke="#1e88d0" strokeWidth="1.800" /></IcoSvg>, Blue],
];

function Taskbar() {
  return (
    <Bar>
      <Start><svg width="16" height="16" viewBox="0 0 16 16"><path d="M0 2.300 6.500 1.400v6.200H0zM7.300 1.300 16 0v7.600H7.300zM0 8.400h6.500v6.200L0 13.700zM7.300 8.400H16V16l-8.700-1.300z" /></svg></Start>
      <Search>
        <Slot $w={17} $ml={11}><svg width="17" height="17" viewBox="0 0 18 18" fill="none" stroke="#222" strokeWidth="1.300"><circle cx="11.500" cy="6.500" r="5.800" /><path d="M7.300 10.700.5 17.500" /></svg></Slot>
        <Fit w={128} ml={11} s={15} lh={22}>Type here to search</Fit>
      </Search>
      <Slot $w={48}><svg width="16" height="16"><circle cx="8" cy="8" r="6.800" fill="none" stroke="#000" strokeWidth="2" /></svg></Slot>
      <Slot $w={48}><svg width="16" height="15" viewBox="0 0 16 15" fill="none" stroke="#000"><path d="M.5 0v2.500h10V0M.5 15v-2.500h10V15M.5 4.500h10v6H.5zM14.500 0v3M14.500 8v7" /><path d="M13 4h3v3h-3z" fill="#000" stroke="none" /></svg></Slot>
      <Apps>{apps.map(([icon, line, bg], i) => <App1 key={i} $line={line} $bg={bg}>{icon}</App1>)}</Apps>
      <Slot $w={12} $ml={375}><svg width="12" height="7" fill="none" stroke="#111" strokeWidth="1.300"><path d="m.5 6.500 5.500-5.500 5.500 5.500" /></svg></Slot>
      <Slot $w={16} $ml={18}><svg width="16" height="11" viewBox="0 0 16 11"><path d="M4.500 2.500h10v8h-9V8" fill="none" stroke="#000" /><path d="M6.500 4.500h6.500v4H6.500zM15 5h1v3h-1zM0 2h5v3q-1 2-2 2v2H2V7Q0 6 0 4zM1 0h1v2H1zM3 0h1v2H3z" /></svg></Slot>
      <Slot $w={16} $ml={16}><svg width="16" height="14" viewBox="0 0 16 14" fill="none" stroke="#000"><path d="M6 2.500h9.500v8H3.500V7M9.500 10.500v3M6 13.500h7M.5.5h4v4h-4zM2.500 4.500V7" /></svg></Slot>
      <Slot $w={17} $ml={16}><svg width="17" height="14" viewBox="0 0 17 14" fill="none" stroke="#000"><path d="M.5 4.500h2.500l3.500-3.500v12L3 9.500H.5zM9 5q1.500 2 0 4M11.300 3q3 4 0 8M13.600 1q4.500 6 0 12" /></svg></Slot>
      <Row $h={40}><Fit w={23} ml={13}>ENG</Fit></Row>
      <Clock><Fit w={42} lh={18}>2:11 PM</Fit><Fit w={51} lh={18}>9/14/2021</Fit></Clock>
      <NoteBox><svg width="16" height="16" viewBox="0 0 16 16"><path d="M0 0h16v12H7l-3 3v-3H0z" /><path d="M3 3.500h10M3 6h10M3 8.500h6" stroke="#d5dae9" /></svg><Count>1</Count></NoteBox>
      <VLine $ml={20} $h={40} $c="#9aa4b5" />
    </Bar>
  );
}

export default function App() {
  return (
    <Desktop>
      <Global />
      <WordTop />
      <WordMain />
      <Browser />
      <Taskbar />
    </Desktop>
  );
}
